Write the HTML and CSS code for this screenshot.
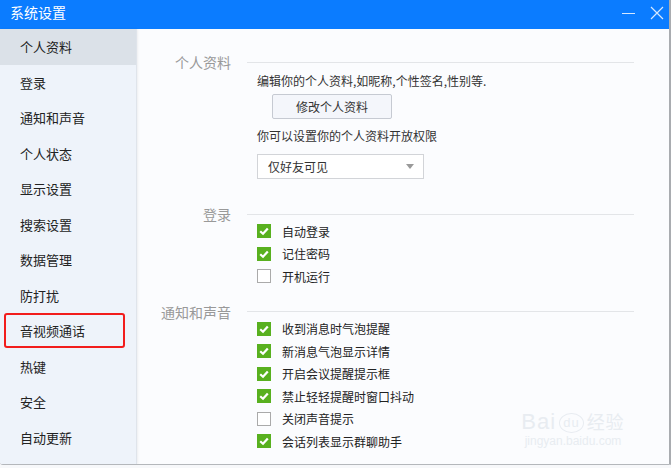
FILE: index.html
```html
<!DOCTYPE html>
<html lang="zh-CN">
<head>
    <meta charset="UTF-8">
    <title>系统设置</title>
    <link rel="stylesheet" href="styles.css">
</head>
<body>
    <div class="window">
        <header class="titlebar">
            <span class="title">系统设置</span>
            <div class="controls">
                <svg width="14" height="14" viewBox="0 0 14 14"><line x1="0" y1="7.5" x2="13" y2="7.5" stroke="#d6e8ff" stroke-width="1"/></svg>
                <svg width="14" height="14" viewBox="0 0 14 14"><path d="M1 1 L13 13 M13 1 L1 13" stroke="#d6e8ff" stroke-width="1.2" fill="none"/></svg>
            </div>
        </header>
        <div class="main">
            <nav class="sidebar">
                <div class="nav-item active">个人资料</div>
                <div class="nav-item">登录</div>
                <div class="nav-item">通知和声音</div>
                <div class="nav-item">个人状态</div>
                <div class="nav-item">显示设置</div>
                <div class="nav-item">搜索设置</div>
                <div class="nav-item">数据管理</div>
                <div class="nav-item">防打扰</div>
                <div class="nav-item marked">音视频通话</div>
                <div class="nav-item">热键</div>
                <div class="nav-item">安全</div>
                <div class="nav-item">自动更新</div>
            </nav>
            <section class="content">
                <div class="section-head"><span class="head-label">个人资料</span><span class="head-line"></span></div>
                <div class="section-body profile">
                    <p class="desc">编辑你的个人资料,如昵称,个性签名,性别等.</p>
                    <button class="btn">修改个人资料</button>
                    <p class="desc perm">你可以设置你的个人资料开放权限</p>
                    <div class="select"><span>仅好友可见</span><i class="arrow"></i></div>
                </div>

                <div class="section-head login"><span class="head-label">登录</span><span class="head-line"></span></div>
                <div class="section-body">
                    <div class="check-row"><span class="box on"></span>自动登录</div>
                    <div class="check-row"><span class="box on"></span>记住密码</div>
                    <div class="check-row"><span class="box"></span>开机运行</div>
                </div>

                <div class="section-head notify"><span class="head-label">通知和声音</span><span class="head-line"></span></div>
                <div class="section-body">
                    <div class="check-row"><span class="box on"></span>收到消息时气泡提醒</div>
                    <div class="check-row"><span class="box on"></span>新消息气泡显示详情</div>
                    <div class="check-row"><span class="box on"></span>开启会议提醒提示框</div>
                    <div class="check-row"><span class="box on"></span>禁止轻轻提醒时窗口抖动</div>
                    <div class="check-row"><span class="box"></span>关闭声音提示</div>
                    <div class="check-row"><span class="box on"></span>会话列表显示群聊助手</div>
                </div>

                <div class="watermark">
                    <span class="wm-big">Bai<span class="wm-du">du</span><span class="wm-cn">经验</span></span>
                    <span class="wm-small">jingyan.baidu.com</span>
                </div>
            </section>
        </div>
    </div>
</body>
</html>
```

FILE: styles.css
```css
body { margin: 0; padding: 0; background: #f7f8fa; font-family: "Noto Sans CJK SC", "Noto Sans", sans-serif; font-size: 12px; color: #333; }
.window { width: 669px; height: 464px; border-right: 2px solid #a9acb0; border-bottom: 1px solid #b4b7bb; background: #fbfcfe; overflow: hidden; border-bottom-left-radius: 3px; }

.titlebar { height: 29px; background: #0b7cff; display: flex; align-items: center; justify-content: space-between; padding: 0 5px 0 10px; }
.title { color: white; font-size: 14px; line-height: 29px; margin-top: -4px; }
.controls { display: flex; gap: 14px; margin-top: -4px; }

.main { display: flex; height: 435px; }
.sidebar { width: 136px; background: #eef3fa; border-right: 1px solid #dfe4eb; box-shadow: 1px 0 2px rgba(0, 0, 0, 0.06); flex-shrink: 0; }
.nav-item { height: 35.5px; line-height: 35.5px; padding-left: 20px; color: #222; font-size: 13px; position: relative; }
.nav-item.active { background: #dbe1e8; }
.nav-item.marked::after { content: ""; position: absolute; left: 4px; top: 0; width: 117px; height: 31px; border: 2.5px solid #f21c1c; border-radius: 3px; }

.content { flex: 1; position: relative; padding-top: 27px; }
.section-head { display: flex; align-items: center; height: 12px; }
.head-label { width: 94px; text-align: right; color: #999; font-size: 14px; line-height: 12px; }
.head-line { flex: 1; height: 1px; background: #e3e5e8; margin: 0 35px 0 16px; }
.section-head.login { margin-top: 29px; }
.section-head.notify { margin-top: 18px; }

.section-body { padding-left: 120px; }
.desc { margin: 0; line-height: 18px; }
.profile .desc:first-child { margin-top: 4px; }
.btn { display: block; margin: 4px 0 0 15px; width: 120px; height: 25px; background: #f4f6fb; border: 1px solid #c6cad2; border-radius: 2px; font-family: inherit; font-size: 12px; color: #333; padding: 0; }
.perm { margin-top: 8px; }
.select { margin-top: 9px; height: 23px; width: 146px; border: 1px solid #d2d4d8; background: white; display: flex; align-items: center; justify-content: space-between; padding: 0 9px 0 10px; }
.arrow { width: 0; height: 0; border-left: 4px solid transparent; border-right: 4px solid transparent; border-top: 5px solid #9a9a9a; }

.check-row { height: 22.5px; display: flex; align-items: center; gap: 11px; color: #222; }
.box { width: 14px; height: 14px; box-sizing: border-box; border: 1px solid #aaa; background: white; }
.box.on { border: none; background: #58b01f url("data:image/svg+xml;utf8,<svg xmlns='http://www.w3.org/2000/svg' width='14' height='14'><path d='M3.2 7.2 L6 9.8 L10.8 4.4' stroke='white' stroke-width='2.2' fill='none'/></svg>") no-repeat center; }

.watermark { position: absolute; left: 374px; top: 380px; width: 124px; display: flex; flex-direction: column; align-items: center; color: #e8ecf1; pointer-events: none; }
.wm-big { font-size: 22px; line-height: 24px; font-family: "Liberation Sans", sans-serif; letter-spacing: 1px; white-space: nowrap; }
.wm-du { display: inline-block; border: 1px solid #e8ecf1; border-radius: 50%; font-size: 13px; line-height: 14px; padding: 2px 3px; margin: 0 3px; vertical-align: 2px; }
.wm-cn { font-family: "Noto Sans CJK SC", sans-serif; font-size: 18px; }
.wm-small { font-size: 12px; line-height: 14px; font-family: "Liberation Sans", sans-serif; }
```
